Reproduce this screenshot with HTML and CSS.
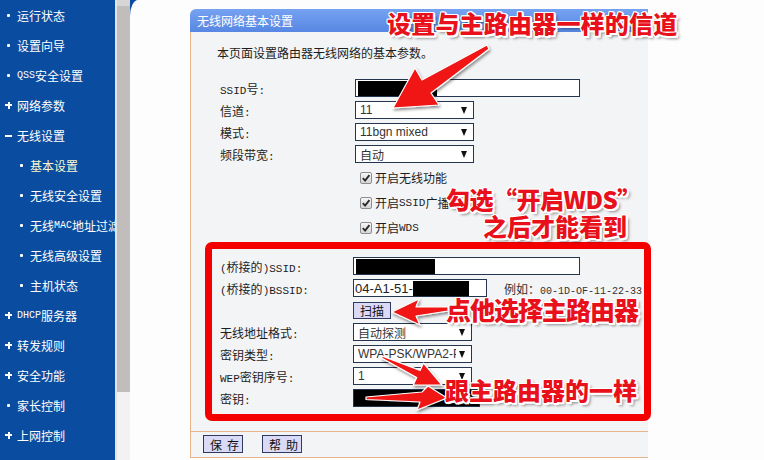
FILE: index.html
```html
<!DOCTYPE html>
<html lang="zh-CN">
<head>
<meta charset="utf-8">
<title>无线网络基本设置</title>
<link rel="stylesheet" href="styles.css">
</head>
<body>
<div class="page">
  <nav class="sidebar">
    <div class="item"><i class="ic dot"></i>运行状态</div>
    <div class="item"><i class="ic dot"></i>设置向导</div>
    <div class="item"><i class="ic dot"></i><span class="m s">QSS</span>安全设置</div>
    <div class="item"><i class="ic plus"></i>网络参数</div>
    <div class="item"><i class="ic minus"></i>无线设置</div>
    <div class="item sub active"><i class="ic dot"></i>基本设置</div>
    <div class="item sub"><i class="ic dot"></i>无线安全设置</div>
    <div class="item sub"><i class="ic dot"></i>无线<span class="m s">MAC</span>地址过滤</div>
    <div class="item sub"><i class="ic dot"></i>无线高级设置</div>
    <div class="item sub"><i class="ic dot"></i>主机状态</div>
    <div class="item"><i class="ic plus"></i><span class="m s">DHCP</span>服务器</div>
    <div class="item"><i class="ic plus"></i>转发规则</div>
    <div class="item"><i class="ic plus"></i>安全功能</div>
    <div class="item"><i class="ic dot"></i>家长控制</div>
    <div class="item"><i class="ic plus"></i>上网控制</div>
    <div class="item"><i class="ic plus"></i>路由功能</div>
  </nav>
  <div class="scroll"><div class="thumb"></div></div>
  <main class="main">
    <div class="canvas">
      <section class="panel">
        <div class="panel-title">无线网络基本设置</div>
        <div class="panel-body">
          <p class="desc">本页面设置路由器无线网络的基本参数。</p>
          <div class="form">
            <div class="row"><span class="lbl"><span class="m">SSID</span>号<span class="m">:</span></span><span class="inp w-ssid"><span class="redact r-ssid"></span></span></div>
            <div class="row"><span class="lbl">信道<span class="m">:</span></span><span class="sel"><span class="val">11</span><i class="arr"></i></span></div>
            <div class="row"><span class="lbl">模式<span class="m">:</span></span><span class="sel"><span class="val">11bgn mixed</span><i class="arr"></i></span></div>
            <div class="row"><span class="lbl">频段带宽<span class="m">:</span></span><span class="sel"><span class="val">自动</span><i class="arr"></i></span></div>
          </div>
          <div class="checks">
            <div class="check-row"><span class="cb"><svg viewBox="0 0 10 10" width="10" height="10"><path d="M1.8 5.2 L4.1 7.6 L8.4 2.2" fill="none" stroke="#2b2b2b" stroke-width="1.9"/></svg></span>开启无线功能</div>
            <div class="check-row"><span class="cb"><svg viewBox="0 0 10 10" width="10" height="10"><path d="M1.8 5.2 L4.1 7.6 L8.4 2.2" fill="none" stroke="#2b2b2b" stroke-width="1.9"/></svg></span>开启<span class="m">SSID</span>广播</div>
            <div class="check-row"><span class="cb"><svg viewBox="0 0 10 10" width="10" height="10"><path d="M1.8 5.2 L4.1 7.6 L8.4 2.2" fill="none" stroke="#2b2b2b" stroke-width="1.9"/></svg></span>开启<span class="m">WDS</span></div>
          </div>
          <div class="wds">
            <div class="row"><span class="lbl"><span class="m">(</span>桥接的<span class="m">)SSID:</span></span><span class="inp w-bssid-long"><span class="redact r-ssid"></span></span></div>
            <div class="row"><span class="lbl"><span class="m">(</span>桥接的<span class="m">)BSSID:</span></span><span class="inp w-bssid"><span class="txt">04-A1-51-</span><span class="redact r-mac"></span></span><span class="hint">例如：<span class="m s">00-1D-OF-11-22-33</span></span></div>
            <div class="row"><span class="lbl"></span><button class="btn scan" type="button">扫描</button></div>
            <div class="row"><span class="lbl">无线地址格式<span class="m">:</span></span><span class="sel"><span class="val">自动探测</span><i class="arr"></i></span></div>
            <div class="row"><span class="lbl">密钥类型<span class="m">:</span></span><span class="sel"><span class="val">WPA-PSK/WPA2-PSK</span><i class="arr"></i></span></div>
            <div class="row"><span class="lbl"><span class="m">WEP</span>密钥序号<span class="m">:</span></span><span class="sel"><span class="val">1</span><i class="arr"></i></span></div>
            <div class="row"><span class="lbl">密钥<span class="m">:</span></span><span class="inp w-key"></span></div>
          </div>
        </div>
        <div class="panel-foot">
          <button class="btn foot" type="button">保存</button>
          <button class="btn foot" type="button">帮助</button>
        </div>
      </section>
    </div>
  </main>

  <svg class="arrows" width="764" height="460" viewBox="0 0 764 460">
    <defs>
      <filter id="sh" x="-30%" y="-30%" width="160%" height="160%">
        <feDropShadow dx="1" dy="2" stdDeviation="1.4" flood-color="#000" flood-opacity="0.45"/>
      </filter>
    </defs>
    <g fill="#f01414" stroke="#ffffff" stroke-width="1.2" stroke-linejoin="round" filter="url(#sh)">
      <polygon points="489,49 431,93 439,105 393,108 415,68 422,80 487,45"/>
      <polygon points="392,312 419,299 416,307 448,307 448,311 416,316 420,325"/>
      <polygon points="382.4,356.1 420.1,370.4 423.5,363.1 442,385 413.3,384.9 416.7,377.6 381.6,357.9"/>
      <polygon points="366,397 422,392 428,386 447,398 417,410 420,402 366,399.5"/>
    </g>
  </svg>

  <div class="note n1">设置与主路由器一样的信道</div>
  <div class="note n2"><span class="l1">勾选“开启WDS”</span><span class="l2">之后才能看到</span></div>
  <div class="note n3">点他选择主路由器</div>
  <div class="note n4">跟主路由器的一样</div>
</div>
</body>
</html>
```

FILE: styles.css
```css
html, body {
  margin: 0;
  padding: 0;
}
body {
  width: 764px;
  height: 460px;
  overflow: hidden;
  background: #fdfdfd;
  font-family: "Noto Sans CJK SC", "Noto Sans", sans-serif;
  font-size: 12px;
  color: #1d1d1d;
}
.page {
  position: relative;
  display: flex;
  width: 764px;
  height: 460px;
  overflow: hidden;
}
.m {
  font-family: "Liberation Mono", monospace;
  font-size: 11px;
}
.m.s {
  font-size: 10px;
}

/* sidebar */
.sidebar {
  width: 115px;
  flex: none;
  background: #0a4da0;
  color: #ffffff;
  overflow: hidden;
}
.item {
  height: 30px;
  display: flex;
  align-items: center;
  padding-left: 4px;
  white-space: nowrap;
}
.item.sub {
  padding-left: 17px;
}
.item.active {
  color: #fbf7cf;
}
.ic {
  display: block;
  position: relative;
  width: 9px;
  height: 9px;
  flex: none;
  margin-right: 4px;
}
.dot::before {
  content: "";
  position: absolute;
  left: 3px;
  top: 3px;
  width: 3px;
  height: 3px;
  border-radius: 1px;
  background: #ffffff;
}
.plus::before {
  content: "";
  position: absolute;
  left: 1px;
  top: 3.5px;
  width: 7px;
  height: 2px;
  background: #ffffff;
}
.plus::after {
  content: "";
  position: absolute;
  left: 3.5px;
  top: 1px;
  width: 2px;
  height: 7px;
  background: #ffffff;
}
.minus::before {
  content: "";
  position: absolute;
  left: 1px;
  top: 4px;
  width: 7px;
  height: 2px;
  background: #ffffff;
}

/* scrollbar */
.scroll {
  width: 15px;
  flex: none;
  box-sizing: border-box;
  border-left: 2px solid #e4e4e4;
  background: linear-gradient(#d6d6d6 0, #d6d6d6 6px, #f2f2f2 6px);
  padding-top: 6px;
}
.thumb {
  height: 386px;
  background: #c1bdbd;
}

/* main */
.main {
  flex: 1;
  background: #0a4da0;
}
.canvas {
  height: 100%;
  box-sizing: border-box;
  background: #fdfdfd;
  border-top-left-radius: 8px 16px;
  padding: 9px 0 0 60px;
}
.panel {
  width: 458px;
}
.panel-title {
  height: 23px;
  line-height: 23px;
  padding-left: 7px;
  color: #ffffff;
  background: linear-gradient(#76a2f1, #5787e3);
  border-top-left-radius: 6px;
}
.panel-body {
  background: #f3f4f6;
  border-left: 1px solid #e6b68a;
  padding: 11px 0 10px 0;
}
.desc {
  margin: 0 0 14px 26px;
  line-height: 20px;
}
.form {
  padding-left: 29px;
}
.row {
  display: flex;
  align-items: center;
  height: 22px;
  white-space: nowrap;
}
.lbl {
  width: 135px;
  flex: none;
}

/* fields */
.inp {
  height: 18px;
  box-sizing: border-box;
  border: 1px solid #24354e;
  background: #ffffff;
  display: flex;
  align-items: center;
  overflow: hidden;
}
.w-ssid { width: 225px; }
.w-bssid-long { width: 227px; }
.w-bssid { width: 134px; }
.w-key { width: 127px; background: #000000; }
.redact {
  display: block;
  height: 15px;
  background: #000000;
}
.r-ssid { width: 79px; margin-left: 2px; }
.r-mac { width: 56px; }
.txt {
  padding-left: 1px;
  font-family: "Liberation Sans", sans-serif;
  font-size: 13px;
  color: #222222;
}
.hint {
  margin-left: 17px;
  color: #333333;
}
.sel {
  width: 119px;
  height: 18px;
  box-sizing: border-box;
  border: 1px solid #24354e;
  background: #ffffff;
  display: flex;
  align-items: center;
  justify-content: space-between;
  padding: 0 6px 0 4px;
  font-family: "Liberation Sans", "Noto Sans CJK SC", sans-serif;
  font-size: 12px;
  color: #333333;
  overflow: hidden;
}
.val {
  overflow: hidden;
  white-space: nowrap;
  flex: 1;
}
.arr {
  display: block;
  flex: none;
  width: 0;
  height: 0;
  margin-left: 3px;
  border-left: 3px solid transparent;
  border-right: 3px solid transparent;
  border-top: 7px solid #111111;
}

/* checkboxes */
.check-row {
  height: 25px;
  display: flex;
  align-items: center;
  padding-left: 169px;
  white-space: nowrap;
}
.cb {
  width: 12px;
  height: 12px;
  box-sizing: border-box;
  flex: none;
  margin-right: 3px;
  border: 1px solid #8e8e8e;
  border-radius: 2px;
  background: linear-gradient(#f6f6f6, #d6d6d6);
  display: flex;
  align-items: center;
  justify-content: center;
}

/* WDS red box */
.wds {
  margin: 2px -3px 0 14px;
  border: 7px solid #f40000;
  border-radius: 7px;
  padding: 6px 0 5px 8px;
}
.wds .lbl {
  width: 133px;
}

/* buttons */
.btn {
  font-family: "Noto Sans CJK SC", sans-serif;
  font-size: 12px;
  color: #111111;
  background: #dadaf6;
  border: 1px solid #2e3a60;
  border-radius: 0;
  margin: 0;
  box-sizing: border-box;
  display: flex;
  align-items: center;
  white-space: nowrap;
  overflow: visible;
}
.scan {
  width: 38px;
  height: 17px;
  padding: 0 0 0 6px;
}
.panel-foot {
  display: flex;
  gap: 19px;
  height: 22px;
  padding: 3px 0 0 12px;
  background: #f3f4f6;
  border-top: 1px solid #e6b68a;
  border-bottom: 1px solid #e6b68a;
  border-left: 1px solid #e6b68a;
}
.foot {
  width: 40px;
  height: 18px;
  padding: 0 0 0 6px;
  letter-spacing: 5px;
}

/* annotations */
.arrows {
  position: absolute;
  left: 0;
  top: 0;
  pointer-events: none;
}
.note {
  position: absolute;
  color: #e8101a;
  font-family: "Noto Sans CJK SC", sans-serif;
  font-weight: 900;
  font-size: 24px;
  line-height: 24px;
  white-space: nowrap;
  text-shadow:
    1px 0 0 #fff, -1px 0 0 #fff, 0 1px 0 #fff, 0 -1px 0 #fff,
    1px 1px 0 #fff, -1px -1px 0 #fff, 1px -1px 0 #fff, -1px 1px 0 #fff,
    2px 0 0 #fff, 0 2px 0 #fff, 2px 2px 0 #fff,
    3px 3px 3px rgba(0, 0, 0, 0.45);
}
.n1 { left: 387px; top: 11px; letter-spacing: 0.2px; }
.n2 { left: 446px; top: 185px; line-height: 27px; }
.n2 .l1 { display: block; letter-spacing: -0.5px; }
.n2 .l2 { display: block; padding-left: 37px; }
.n3 { left: 446px; top: 297px; font-size: 25px; letter-spacing: -1px; }
.n4 { left: 445px; top: 378px; }
```
